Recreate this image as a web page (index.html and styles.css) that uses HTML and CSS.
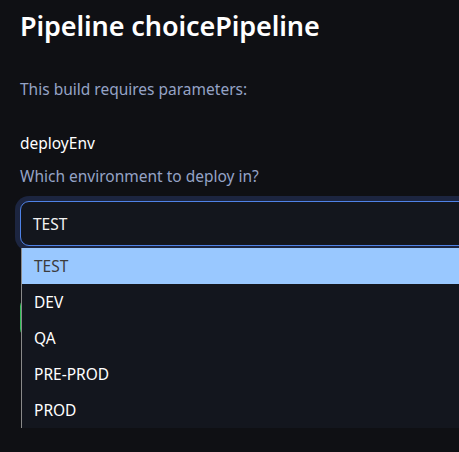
FILE: index.html
```html
<!DOCTYPE html>
<html>
<head>
<meta charset="utf-8">
<link rel="stylesheet" href="styles.css">
</head>
<body>
<main class="page">
  <h1 class="title">Pipeline choicePipeline</h1>
  <p class="intro">This build requires parameters:</p>
  <div class="param">
    <div class="param-name">deployEnv</div>
    <div class="param-desc">Which environment to deploy in?</div>
    <div class="select-wrap">
      <div class="select">TEST</div>
      <ul class="options">
        <li class="option selected">TEST</li>
        <li class="option">DEV</li>
        <li class="option">QA</li>
        <li class="option">PRE-PROD</li>
        <li class="option">PROD</li>
      </ul>
    </div>
  </div>
  <div class="actions">
    <button class="build">Build</button>
  </div>
</main>
</body>
</html>
```
FILE: styles.css
```css
html, body {
  margin: 0;
  padding: 0;
  background: #0f1014;
  height: 100%;
  overflow: hidden;
}
.page {
  padding: 8px 0 0 20px;
  height: 100%;
  box-sizing: border-box;
  overflow: hidden;
  font-family: "Noto Sans", "Lato", sans-serif;
  color: #ffffff;
}
.title {
  margin: 0;
  font-size: 27px;
  line-height: 36px;
  font-weight: 600;
  letter-spacing: -0.1px;
}
.intro {
  margin: 34px 0 0 0;
  font-size: 15.5px;
  line-height: 22px;
  color: #95a3c6;
}
.param {
  margin-top: 32px;
}
.param-name {
  font-size: 15.5px;
  line-height: 22px;
  color: #ffffff;
}
.param-desc {
  margin-top: 11px;
  font-size: 15.5px;
  line-height: 22px;
  color: #95a3c6;
}
.select-wrap {
  position: relative;
  margin-top: 14px;
}
.select {
  box-sizing: border-box;
  height: 45px;
  width: 460px;
  border: 1.5px solid #4f82e6;
  border-radius: 9px;
  box-shadow: 0 0 0 5px #1c2540;
  background: #13161d;
  padding: 0 0 0 12px;
  display: flex;
  align-items: center;
  font-size: 15.5px;
  color: #f2f2f2;
}
.options {
  position: absolute;
  left: 1px;
  top: 47px;
  width: 460px;
  margin: 0;
  padding: 0;
  list-style: none;
  background: #13161e;
  border-left: 1px solid #8a8a8a;
  z-index: 2;
}
.option {
  height: 36px;
  display: flex;
  align-items: center;
  padding-left: 12px;
  font-size: 15.5px;
  color: #ffffff;
}
.option.selected {
  background: #99c8ff;
  color: #3c3c3c;
}
.actions {
  margin-top: 53px;
}
.build {
  height: 37px;
  padding: 0 16px;
  border: 0;
  border-radius: 7px;
  background: #2fbf57;
  color: #fff;
  font-family: inherit;
  font-size: 15.5px;
}
```
